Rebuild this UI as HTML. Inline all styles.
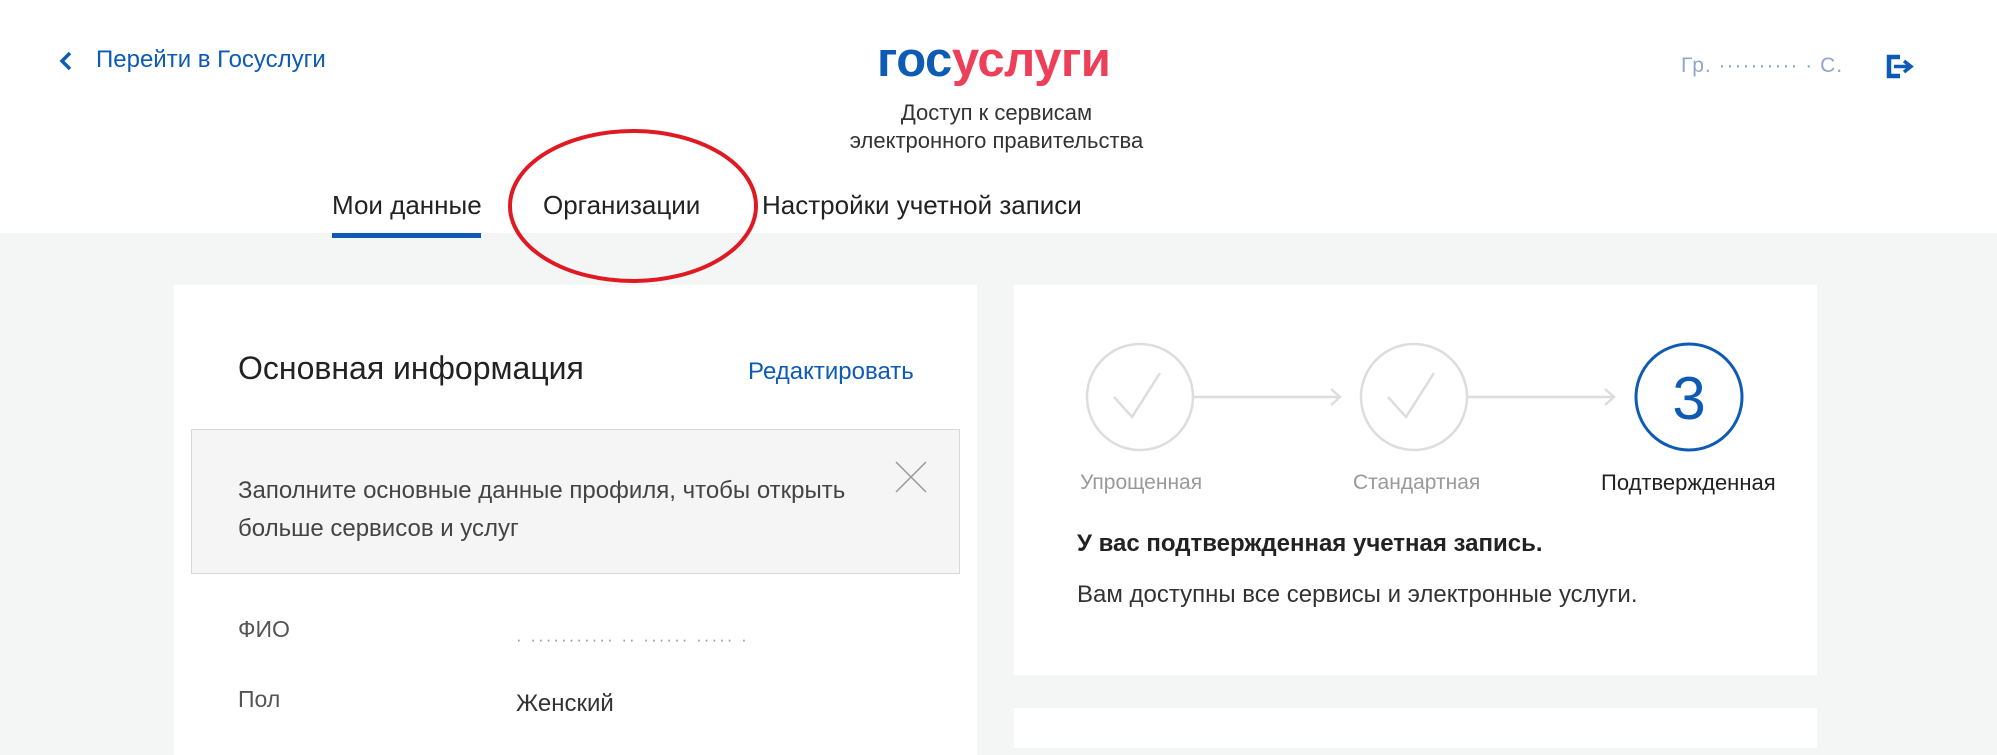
<!DOCTYPE html>
<html><head><meta charset="utf-8"><style>
*{margin:0;padding:0;box-sizing:border-box}
body{width:1997px;height:739px;overflow:hidden;background:#f4f6f6;font-family:"Liberation Sans",sans-serif;color:#333;position:relative}
.abs{position:absolute;white-space:nowrap}
.hdr{position:absolute;left:0;top:0;width:1997px;height:233px;background:#fff}
.card{position:absolute;background:#fff}
</style></head><body>
<div class="hdr"></div>
<svg class="abs" style="left:58px;top:51px" width="16" height="20"><path d="M12 2 L4 10 L12 18" stroke="#0d5bb5" stroke-width="3.5" fill="none"/></svg>
<div class="abs" style="left:96px;top:46px;font-size:24px;color:#0d5bb5">Перейти в Госуслуги</div>
<div class="abs" style="left:877px;top:32px;font-size:49px;font-weight:bold;letter-spacing:-0.5px"><span style="color:#0d5bb5">гос</span><span style="color:#ee3f58">услуги</span></div>
<div class="abs" style="left:0;width:1993px;top:99px;font-size:22px;text-align:center;color:#333;line-height:28px">Доступ к сервисам<br>электронного правительства</div>
<div class="abs" style="left:1681px;top:54px;font-size:21px;color:#8fa8c8;letter-spacing:1px">Гр. ·········· · С.</div>
<svg class="abs" style="left:1886px;top:54px" width="30" height="26"><path d="M14 3 H3 V22 H14" stroke="#0d5bb5" stroke-width="4.5" fill="none"/><path d="M8 12.5 H23 M18 7 L25 12.5 L18 18" stroke="#0d5bb5" stroke-width="3.5" fill="none"/></svg>
<div class="abs" style="left:332px;top:190px;font-size:26px;color:#222">Мои данные</div>
<div class="abs" style="left:332px;top:233px;width:149px;height:5px;background:#0d5bb5"></div>
<div class="abs" style="left:543px;top:190px;font-size:26px;color:#222">Организации</div>
<div class="abs" style="left:762px;top:190px;font-size:26px;color:#222">Настройки учетной записи</div>

<div class="card" style="left:174px;top:285px;width:803px;height:470px"></div>
<div class="abs" style="left:238px;top:350px;font-size:32px;color:#222">Основная информация</div>
<div class="abs" style="left:748px;top:358px;font-size:24px;color:#0d5bb5">Редактировать</div>
<div class="abs" style="left:191px;top:429px;width:769px;height:145px;background:#f5f5f5;border:1px solid #d8d8d8"></div>
<div class="abs" style="left:238px;top:472px;font-size:24px;color:#444;line-height:38px">Заполните основные данные профиля, чтобы открыть<br>больше сервисов и услуг</div>
<svg class="abs" style="left:895px;top:461px" width="32" height="32"><path d="M1 1 L31 31 M31 1 L1 31" stroke="#999" stroke-width="1.5"/></svg>
<div class="abs" style="left:238px;top:616px;font-size:23px;color:#555">ФИО</div>
<div class="abs" style="left:516px;top:630px;font-size:17px;color:#999;letter-spacing:2px">· ··········· ·· ······ ····· ·</div>
<div class="abs" style="left:238px;top:686px;font-size:23px;color:#555">Пол</div>
<div class="abs" style="left:516px;top:690px;font-size:24px;color:#333">Женский</div>

<div class="card" style="left:1014px;top:285px;width:803px;height:390px"></div>
<div class="card" style="left:1014px;top:708px;width:803px;height:40px"></div>
<svg class="abs" style="left:1014px;top:285px" width="803" height="200">
<g fill="none" stroke="#ddd" stroke-width="2.5">
<circle cx="126" cy="112" r="53"/><circle cx="400" cy="112" r="53"/>
<path d="M100 112 L118 132 L146 88"/><path d="M374 112 L392 132 L420 88"/>
<path d="M180 112 H325 M317 104 L326 112 L317 120"/>
<path d="M454 112 H599 M591 104 L600 112 L591 120"/>
</g>
<circle cx="675" cy="112" r="53" fill="none" stroke="#0d5bb5" stroke-width="3"/>
<text x="675" y="134" text-anchor="middle" font-family="Liberation Sans" font-size="60" fill="#0d5bb5">3</text>
</svg>
<div class="abs" style="left:1080px;top:471px;font-size:21px;color:#999">Упрощенная</div>
<div class="abs" style="left:1353px;top:471px;font-size:21px;color:#999">Стандартная</div>
<div class="abs" style="left:1601px;top:470px;font-size:22px;color:#222">Подтвержденная</div>
<div class="abs" style="left:1077px;top:530px;font-size:24px;font-weight:bold;color:#222">У вас подтвержденная учетная запись.</div>
<div class="abs" style="left:1077px;top:581px;font-size:24px;color:#333">Вам доступны все сервисы и электронные услуги.</div>

<svg class="abs" style="left:0;top:0" width="1997" height="739"><ellipse cx="633" cy="206" rx="123" ry="75" fill="none" stroke="#e01a22" stroke-width="4"/></svg>
</body></html>
